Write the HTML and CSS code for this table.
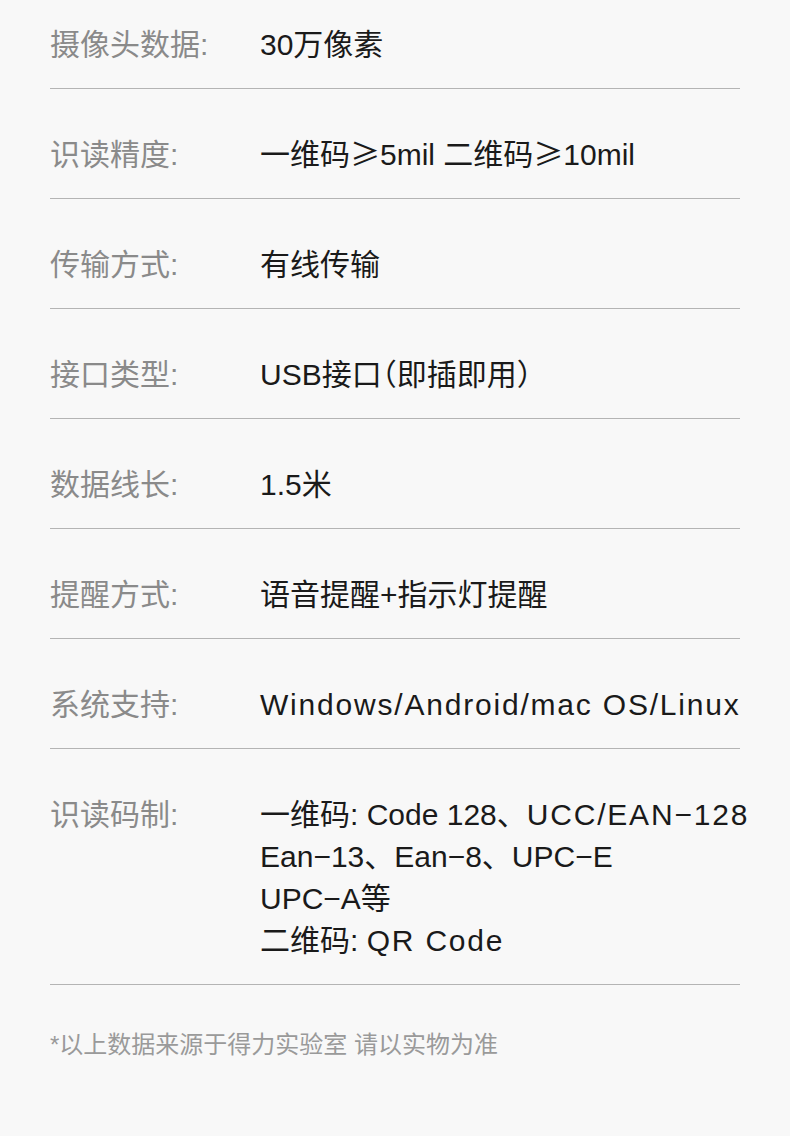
FILE: index.html
```html
<!DOCTYPE html>
<html lang="zh-CN">

<head>
    <meta charset="UTF-8">
    <meta name="viewport" content="width=device-width, initial-scale=1.0">
    <title>产品参数</title>
    <link rel="stylesheet" href="styles.css">
</head>

<body>
    <div class="specs">
        <div class="row">
            <div class="label">摄像头数据:</div>
            <div class="value">30万像素</div>
        </div>
        <div class="row">
            <div class="label">识读精度:</div>
            <div class="value">一维码<span class="sym">≥</span>5mil 二维码<span class="sym">≥</span>10mil</div>
        </div>
        <div class="row">
            <div class="label">传输方式:</div>
            <div class="value">有线传输</div>
        </div>
        <div class="row">
            <div class="label">接口类型:</div>
            <div class="value">USB接口<span class="half">（</span>即插即用<span class="half">）</span></div>
        </div>
        <div class="row">
            <div class="label">数据线长:</div>
            <div class="value">1.5米</div>
        </div>
        <div class="row">
            <div class="label">提醒方式:</div>
            <div class="value">语音提醒+指示灯提醒</div>
        </div>
        <div class="row">
            <div class="label">系统支持:</div>
            <div class="value"><span class="en">Windows/Android/mac OS/Linux</span></div>
        </div>
        <div class="row">
            <div class="label">识读码制:</div>
            <div class="value">一维码: Code 128、<span class="en">UCC/EAN−128</span><br>Ean−13、Ean−8、UPC−E<br>UPC−A等<br>二维码: <span class="en">QR Code</span></div>
        </div>
    </div>

    <p class="note">*以上数据来源于得力实验室 请以实物为准</p>
</body>

</html>
```

FILE: styles.css
```css
body {
    margin: 0;
    padding: 0;
    background-color: #f8f8f8;
    font-family: "Liberation Sans", "Noto Sans CJK SC", sans-serif;
}

.specs {
    margin: 0 50px;
}

.row {
    display: flex;
    padding: 45px 0 22px;
    border-bottom: 1px solid #b4b4b4;
    font-size: 30px;
    line-height: 42px;
}

.row:first-child {
    padding-top: 24px;
}

.label {
    width: 210px;
    flex-shrink: 0;
    color: #8a8a8a;
}

.value {
    color: #1a1a1a;
    white-space: nowrap;
}

/* latin runs are a bit wider in the original font */
.en {
    letter-spacing: 1.8px;
}

.sym,
.half {
    font-family: "Noto Sans CJK SC", sans-serif;
    line-height: 1;
}

.half {
    font-feature-settings: "halt";
}

.note {
    margin: 45px 50px 0;
    font-size: 24px;
    line-height: 30px;
    color: #9a9a9a;
}
```
